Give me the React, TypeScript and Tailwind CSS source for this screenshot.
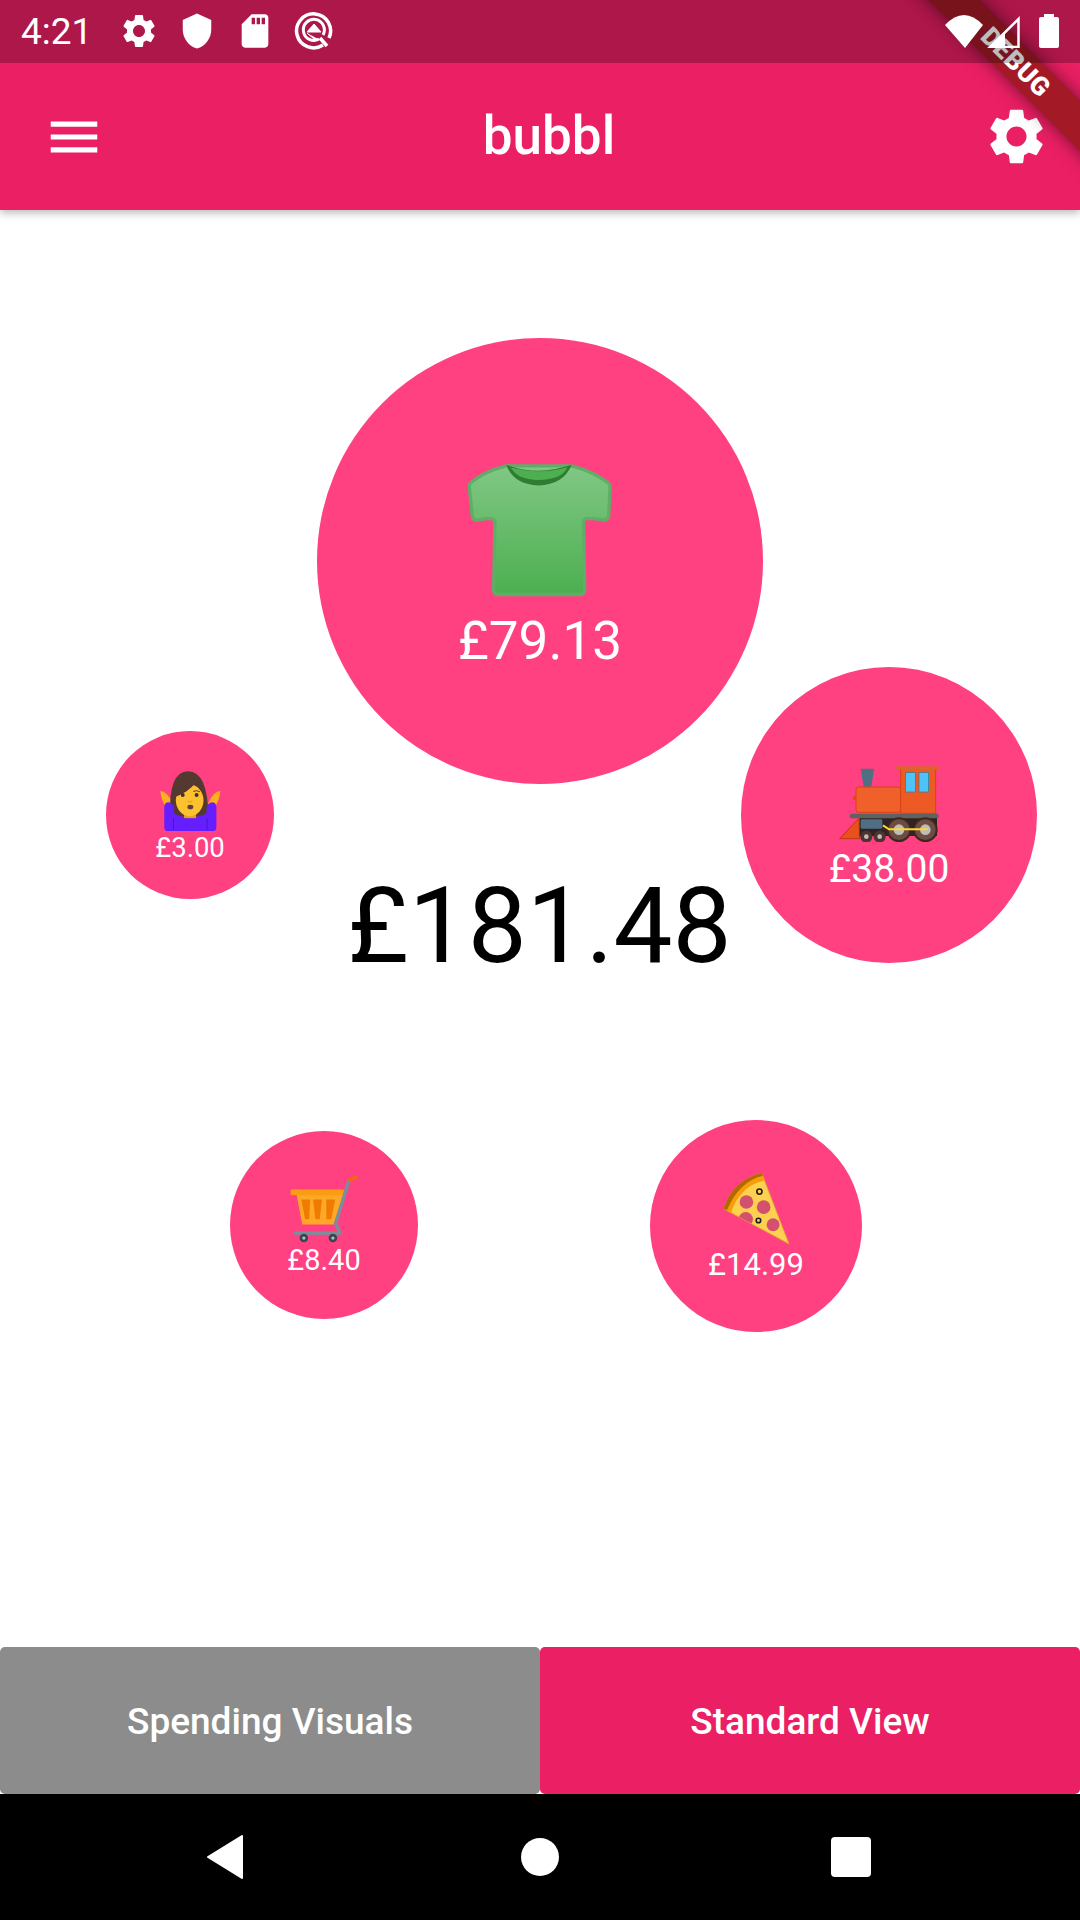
import React from 'react';
import { MdMenu, MdSdCard, MdSettings, MdShield } from 'react-icons/md';

const font = { fontFamily: 'Roboto, sans-serif' };

function Shirt() {
  return (
    <svg viewBox="140 125 436 402" className="-ml-[2px] h-[134px] w-[145px]">
      <defs>
        <linearGradient id="shirt" x1="0" y1="0" x2="0" y2="1">
          <stop offset="0" stopColor="#81c784" />
          <stop offset="1" stopColor="#4caf50" />
        </linearGradient>
      </defs>
      <path
        d="M258 133 Q190 150 150 185 Q146 190 147 197 L156 285 Q158 296 170 296 Q195 292 210 291 Q224 292 224 305 L220 505 Q220 520 234 520 L480 520 Q494 520 494 505 L490 305 Q490 292 502 291 Q530 292 552 296 Q564 296 566 285 L570 197 Q571 190 566 185 Q520 150 455 133 Z"
        fill="url(#shirt)"
        stroke="#5fae68"
        strokeWidth="10"
        strokeLinejoin="round"
      />
      <path d="M258 130 Q355 165 455 130 Q430 190 355 192 Q280 190 258 130 Z" fill="#2e7d32" />
      <path d="M272 138 Q355 160 442 138 Q425 174 355 176 Q290 174 272 138 Z" fill="#4caf50" />
    </svg>
  );
}

function Train() {
  return (
    <svg viewBox="118 80 300 228" className="h-[76px] w-[100px]">
      <path d="M183 88 L223 88 L215 142 L192 142 Z" fill="#4f6f84" />
      <circle cx="165" cy="177" r="6" fill="#e64a19" />
      <rect x="169" y="143" width="134" height="76" rx="8" fill="#f0602a" stroke="#d84315" strokeWidth="3" />
      <rect x="303" y="86" width="105" height="136" fill="#ee5a24" stroke="#d84315" strokeWidth="3" />
      <rect x="290" y="81" width="127" height="9" fill="#d9662b" />
      <rect x="318" y="100" width="29" height="58" fill="#4fc3f7" stroke="#1d7ea8" strokeWidth="2" />
      <rect x="358" y="100" width="29" height="58" fill="#4fc3f7" stroke="#1d7ea8" strokeWidth="2" />
      <path d="M178 237 L180 298 L120 298 Z" fill="#e8501c" stroke="#bf360c" strokeWidth="3" strokeLinejoin="round" />
      <rect x="180" y="236" width="232" height="54" fill="#2f2421" />
      <rect x="150" y="223" width="267" height="14" rx="6" fill="#616161" />
      <rect x="183" y="240" width="65" height="28" rx="4" fill="#4f6f84" />
      {[298, 377].map(cx => (
        <g key={cx}>
          <circle cx={cx} cy="271" r="37" fill="#3e2723" />
          <circle cx={cx} cy="271" r="31" fill="#6d4c41" />
          <circle cx={cx} cy="271" r="16" fill="#bdbdbd" />
        </g>
      ))}
      {[200, 240].map(cx => (
        <g key={cx}>
          <circle cx={cx} cy="292" r="18" fill="#4e342e" />
          <circle cx={cx} cy="292" r="7" fill="#bdbdbd" />
        </g>
      ))}
      <path d="M250 258 L268 270 L384 270" fill="none" stroke="#fdd835" strokeWidth="6" />
    </svg>
  );
}

function Shrug() {
  return (
    <svg viewBox="84 58 188 188" className="h-[62px] w-[62px]">
      <path d="M88 122 Q108 122 126 160 L102 166 Q90 146 88 122 Z" fill="#fbb01e" />
      <path d="M270 122 Q250 122 232 160 L256 166 Q268 146 270 122 Z" fill="#fbb01e" />
      <path d="M118 200 Q112 62 172 62 Q232 62 234 200 Z" fill="#543930" />
      <path d="M100 172 Q100 156 114 156 Q130 158 130 178 L130 190 Q150 202 176 202 Q204 202 228 190 L228 178 Q230 158 244 156 Q258 156 258 172 L258 232 Q258 243 246 243 L112 243 Q100 243 100 232 Z" fill="#651fff" />
      <path d="M128 205 L128 240 M230 205 L230 240" stroke="#4a15c4" strokeWidth="3" />
      <rect x="160" y="180" width="36" height="24" fill="#e5a21a" />
      <ellipse cx="177" cy="150" rx="42" ry="48" fill="#fdc02f" />
      <path d="M133 140 Q172 126 196 96 Q210 118 222 140 Q224 88 175 82 Q130 88 133 140 Z" fill="#543930" />
      <circle cx="156" cy="134" r="6" fill="#40302a" />
      <circle cx="198" cy="134" r="6" fill="#40302a" />
      <path d="M146 124 Q156 118 166 123 M188 123 Q198 118 208 124" fill="none" stroke="#543930" strokeWidth="3" />
      <ellipse cx="179" cy="170" rx="9" ry="7" fill="#5d4037" />
      <path d="M171 153 Q178 158 185 153" fill="none" stroke="#d99a1c" strokeWidth="3" />
    </svg>
  );
}

function Cart() {
  return (
    <svg viewBox="58 38 206 206" className="h-[68px] w-[68px]">
      <path d="M78 98 L220 98 L190 188 L95 188 Z" fill="#ffa726" />
      <rect x="60" y="82" width="162" height="17" rx="3" fill="#fb9c12" />
      <path d="M92 112 L119 112 L116 172 L104 172 Z" fill="#ef7c00" />
      <path d="M128 112 L155 112 L148 172 L135 172 Z" fill="#ef7c00" />
      <path d="M168 112 L195 112 L183 172 L168 172 Z" fill="#ef7c00" />
      <path d="M236 56 L196 185 L210 214 L74 214" fill="none" stroke="#78909c" strokeWidth="10" strokeLinejoin="round" strokeLinecap="round" />
      <path d="M240 52 L258 45" stroke="#ef6c00" strokeWidth="10" strokeLinecap="round" />
      {[100, 188].map(cx => (
        <g key={cx}>
          <circle cx={cx} cy="229" r="13" fill="#37474f" />
          <circle cx={cx} cy="229" r="5" fill="#b0bec5" />
        </g>
      ))}
    </svg>
  );
}

function Pizza() {
  return (
    <svg viewBox="66 33 206 224" className="h-[73px] w-[67px]">
      <defs>
        <clipPath id="slice">
          <path d="M72 148 Q100 62 185 37 L268 252 Z" />
        </clipPath>
      </defs>
      <path d="M72 148 Q100 62 185 37 L268 252 Q270 256 262 250 Z" fill="#fdd14f" stroke="#e0a82e" strokeWidth="3" strokeLinejoin="round" />
      <path d="M68 145 Q95 58 187 35 L192 60 Q120 75 90 158 Z" fill="#f59e0b" />
      <path d="M68 145 Q95 58 187 35 L188 44 Q115 62 78 150 Z" fill="#b26a00" />
      <g clipPath="url(#slice)">
        <circle cx="136" cy="178" r="22" fill="#d4506f" />
      </g>
      <circle cx="138" cy="125" r="21" fill="#d4506f" />
      <circle cx="191" cy="141" r="21" fill="#d4506f" />
      <circle cx="220" cy="195" r="20" fill="#d4506f" />
      <circle cx="178" cy="93" r="8" fill="none" stroke="#1f1f1f" strokeWidth="5" />
      <circle cx="175" cy="182" r="7" fill="none" stroke="#1f1f1f" strokeWidth="5" />
    </svg>
  );
}

function Bubble({
  className,
  amount,
  textClass,
  children,
}: {
  className: string;
  amount: string;
  textClass: string;
  children: React.ReactNode;
}) {
  return (
    <div className={`absolute flex flex-col items-center justify-center rounded-full bg-[#ff4081] text-white ${className}`}>
      {children}
      <span className={textClass}>{amount}</span>
    </div>
  );
}

function StatusBar() {
  return (
    <div className="absolute left-0 top-0 z-30 flex h-[63px] w-full items-center justify-between bg-black/[0.26] pl-[21px] pr-[21px]">
      <div className="flex items-center">
        <span className="w-[98px] text-[37px] leading-none text-white">4:21</span>
        <MdSettings className="h-[40px] w-[40px] -translate-y-[1px] text-white" />
        <MdShield className="ml-[19px] h-[38px] w-[38px] -translate-y-[1px] text-white" />
        <MdSdCard className="ml-[19px] h-[40px] w-[40px] -translate-y-[1px] text-white" />
        <svg viewBox="0 0 40 40" className="ml-[19px] h-[40px] w-[40px] -translate-y-[1px]" fill="none" stroke="#fff">
          <path d="M29 34 A17 17 0 1 1 35 27" strokeWidth="3.5" />
          <path d="M25 28 A10.5 10.5 0 1 1 29 24" strokeWidth="3" />
          <path d="M20 13 L27 21 L13 21 Z M13 22 L20 28 L24 28" fill="#fff" strokeWidth="1" />
          <path d="M26 27 L33 35" strokeWidth="3.5" />
        </svg>
      </div>
      <div className="flex items-center">
        <svg viewBox="0 0 38 33" className="h-[33px] w-[38px]">
          <path d="M0 10 Q19 -10 38 10 L20 33 Z" fill="#fff" />
        </svg>
        <svg viewBox="0 0 33 32" className="ml-[4px] h-[32px] w-[33px]" fill="none">
          <path d="M31.5 3 L31.5 31 L3 31 Z" stroke="#fff" strokeWidth="2.5" />
          <path d="M18 16 L18 32 L2 32 Z" fill="#fff" />
        </svg>
        <div className="relative ml-[19px] mt-[2px] h-[31px] w-[20px] rounded-[2px] bg-white before:absolute before:-top-[3px] before:left-[5px] before:h-[3px] before:w-[10px] before:bg-white" />
      </div>
    </div>
  );
}

export default function App() {
  return (
    <div className="relative flex h-[1920px] w-[1080px] flex-col overflow-hidden bg-white" style={font}>
      <div className="relative flex-1">
        <div className="relative z-10 flex h-[210px] items-center justify-between bg-[#eb1f63] pl-[43px] pr-[30px] pt-[63px] shadow-[0_3px_8px_rgba(0,0,0,0.28)]">
          <MdMenu className="h-[62px] w-[62px] text-white" />
          <span className="ml-[10px] text-[53px] font-medium leading-none text-white">bubbl</span>
          <MdSettings className="h-[67px] w-[67px] text-white" />
        </div>

        <Bubble className="left-[317px] top-[338px] h-[446px] w-[446px] pt-[8px]" amount="£79.13" textClass="mt-[18px] text-[53px] leading-none">
          <Shirt />
        </Bubble>
        <Bubble className="left-[741px] top-[667px] h-[296px] w-[296px] pt-[24px]" amount="£38.00" textClass="mt-[8px] text-[39px] leading-none">
          <Train />
        </Bubble>
        <Bubble className="left-[106px] top-[731px] h-[168px] w-[168px] pt-[1px]" amount="£3.00" textClass="mt-[2px] text-[27.5px] leading-none">
          <Shrug />
        </Bubble>
        <Bubble className="left-[230px] top-[1131px] h-[188px] w-[188px]" amount="£8.40" textClass="mt-[3px] text-[29px] leading-none">
          <Cart />
        </Bubble>
        <Bubble className="left-[650px] top-[1120px] h-[212px] w-[212px]" amount="£14.99" textClass="mt-[4px] text-[31px] leading-none">
          <Pizza />
        </Bubble>
        <div className="absolute left-0 top-[865px] w-[1079px] text-center text-[105px] leading-[124px] text-black">£181.48</div>
      </div>

      <div className="flex h-[147px]">
        <button className="flex flex-1 items-center justify-center rounded-[5px] bg-[#8c8c8c] pt-[3px] text-[37px] font-medium text-white">
          Spending Visuals
        </button>
        <button className="flex flex-1 items-center justify-center rounded-[5px] bg-[#eb1f63] pt-[3px] text-[37px] font-medium text-white">
          Standard View
        </button>
      </div>

      <div className="flex h-[126px] items-center bg-black">
        <svg viewBox="0 0 38 44" className="ml-[206px] h-[44px] w-[38px]">
          <path d="M36 1 L36 43 L2 22 Z" fill="#fff" stroke="#fff" strokeWidth="2" strokeLinejoin="round" />
        </svg>
        <div className="ml-[277px] h-[38px] w-[38px] rounded-full bg-white" />
        <div className="ml-[272px] h-[40px] w-[40px] rounded-[4px] bg-white" />
      </div>

      {/* debug banner, sits under the status bar scrim */}
      <div className="absolute left-[866px] top-[44px] z-20 flex h-[36px] w-[300px] rotate-45 items-center justify-center bg-[#a31a26] text-[26px] font-black tracking-[0.5px] text-white shadow-[0_0_18px_rgba(0,0,0,0.5)]">
        DEBUG
      </div>

      <StatusBar />
    </div>
  );
}
